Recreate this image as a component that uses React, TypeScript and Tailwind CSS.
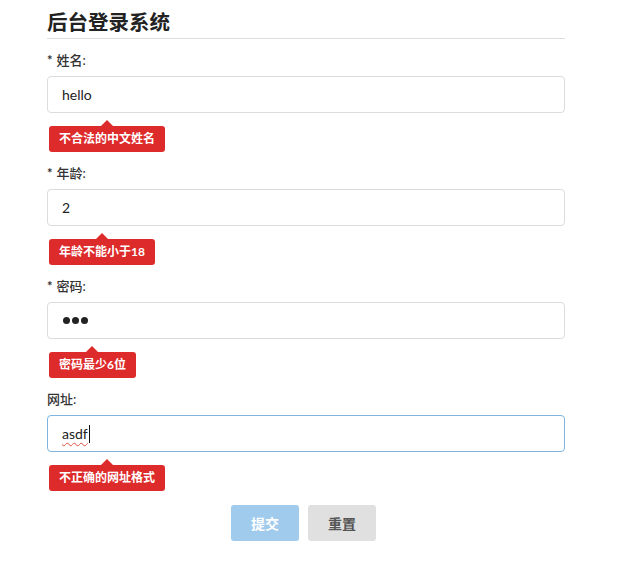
import React from "react"

const font = { fontFamily: "Lato, 'Noto Sans CJK SC', sans-serif" }

function Tip({ text }: { text: string }) {
  return (
    <div className="mt-[13px] flex h-[26px] pl-[2px]">
      <div className="relative flex items-center rounded-[3px] bg-[#dd2a2a] px-[10px] text-[12px] font-bold text-white">
        <span className="absolute -top-[6px] left-1/2 -ml-[6px] h-0 w-0 border-x-[6px] border-b-[6px] border-x-transparent border-b-[#dd2a2a]" />
        {text}
      </div>
    </div>
  )
}

function Field({
  label,
  required,
  error,
  focused,
  children,
}: {
  label: string
  required?: boolean
  error: string
  focused?: boolean
  children: React.ReactNode
}) {
  return (
    <div className="mb-[12px]">
      <div className="flex h-[20px] items-center text-[13px] font-medium text-[#333]">
        {required && <span className="mr-[4px] font-bold">*</span>}
        {label}:
      </div>
      <div
        className={
          focused
            ? "mt-[5px] flex h-[37px] items-center rounded-[4px] border border-[#7eb4dd] bg-white pl-[14px] text-[14px] text-[#222]"
            : "mt-[5px] flex h-[37px] items-center rounded-[4px] border border-[#dcdcdc] bg-white pl-[14px] text-[14px] text-[#222]"
        }
      >
        {children}
      </div>
      <Tip text={error} />
    </div>
  )
}

export default function App() {
  return (
    <div className="min-h-[565px] bg-white" style={font}>
      <div className="ml-[47px] w-[518px] pt-[10px]">
        <h1 className="border-b border-[#dddddd] pb-[4px] text-[20.5px] leading-[24px] font-bold text-[#222]">
          后台登录系统
        </h1>
        <div className="pt-[12px]">
          <Field label="姓名" required error="不合法的中文姓名">
            hello
          </Field>
          <Field label="年龄" required error="年龄不能小于18">
            2
          </Field>
          <Field label="密码" required error="密码最少6位">
            <div className="flex gap-[2px] pl-[1px]">
              <span className="h-[7px] w-[7px] rounded-full bg-[#222]" />
              <span className="h-[7px] w-[7px] rounded-full bg-[#222]" />
              <span className="h-[7px] w-[7px] rounded-full bg-[#222]" />
            </div>
          </Field>
          <Field label="网址" error="不正确的网址格式" focused>
            <span className="underline decoration-[#e0533f] decoration-wavy decoration-1 underline-offset-[3px]">asdf</span>
            <span className="ml-[1px] h-[18px] w-px bg-[#111]" />
          </Field>
        </div>
        <div className="flex justify-center gap-[9px] pr-[5px] pt-[2px]">
          <button className="h-[36px] w-[68px] rounded-[3px] bg-[#a0cbec] text-[14px] font-bold text-white">
            提交
          </button>
          <button className="h-[36px] w-[68px] rounded-[3px] bg-[#e0e0e0] text-[14px] font-bold text-[#555]">
            重置
          </button>
        </div>
      </div>
    </div>
  )
}
